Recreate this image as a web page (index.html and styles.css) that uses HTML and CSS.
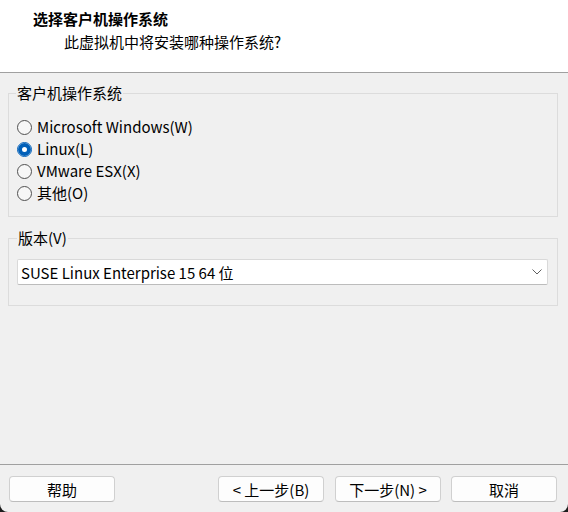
FILE: index.html
```html
<!DOCTYPE html>
<html lang="zh-CN">

<head>
    <meta charset="UTF-8">
    <meta name="viewport" content="width=device-width, initial-scale=1.0">
    <title>新建虚拟机向导</title>
    <link rel="stylesheet" href="styles.css">
</head>

<body>

    <div id="header">
        <p class="title">选择客户机操作系统</p>
        <p class="subtitle">此虚拟机中将安装哪种操作系统?</p>
    </div>

    <div id="main">
        <fieldset class="group group-os">
            <legend>客户机操作系统</legend>
            <label class="option"><input type="radio" name="os">Microsoft Windows(W)</label>
            <label class="option"><input type="radio" name="os" checked>Linux(L)</label>
            <label class="option"><input type="radio" name="os">VMware ESX(X)</label>
            <label class="option"><input type="radio" name="os">其他(O)</label>
        </fieldset>

        <fieldset class="group group-version">
            <legend>版本(V)</legend>
            <div class="select">
                <span>SUSE Linux Enterprise 15 64 位</span>
                <svg width="10" height="6" viewBox="0 0 10 6">
                    <path d="M0.5 0.5 L5 5 L9.5 0.5" fill="none" stroke="#606060" stroke-width="1"/>
                </svg>
            </div>
        </fieldset>
    </div>

    <div id="footer">
        <button class="btn">帮助</button>
        <div class="spacer"></div>
        <button class="btn">&lt; 上一步(B)</button>
        <button class="btn btn-next">下一步(N) &gt;</button>
        <button class="btn btn-cancel">取消</button>
    </div>

</body>

</html>
```

FILE: styles.css
```css
html {
    margin: 0;
    padding: 0;
    background: #1c1c1c;
}

body {
    margin: 0;
    height: 512px;
    display: flex;
    flex-direction: column;
    background: #f0f0f0;
    border-radius: 0 0 8px 8px;
    overflow: hidden;
    font-family: "Noto Sans CJK SC", "Noto Sans", sans-serif;
    font-size: 15px;
    color: #000;
}

#header {
    height: 72px;
    box-sizing: content-box;
    background: #fff;
    border-bottom: 1px solid #a0a0a0;
    padding: 0;
}

#header p {
    margin: 0;
    line-height: 20px;
}

.title {
    padding: 9px 0 0 33px;
    font-weight: bold;
}

.subtitle {
    padding: 3px 0 0 64px;
}

#main {
    flex: 1;
}

.group {
    margin: 10px 10px 0 8px;
    padding: 0 7px;
    border: 1px solid #dcdcdc;
    min-width: 0;
}

.group legend {
    padding: 0 1px;
    line-height: 20px;
}

.group-os {
    padding-top: 13px;
    padding-bottom: 12px;
}

.group-version {
    margin-top: 11px;
    padding: 11px 9px 20px 8px;
}

.option {
    display: flex;
    align-items: center;
    height: 22px;
    line-height: 22px;
    margin-left: 1px;
}

.option input {
    appearance: none;
    -webkit-appearance: none;
    width: 15px;
    height: 15px;
    margin: 0 5px 0 0;
    border: 1px solid #505050;
    border-radius: 50%;
    background: #f7f7f7;
}

.option input:checked {
    border-color: #005fb8;
    background: #fff;
    box-shadow: inset 0 0 0 4px #005fb8;
}

.select {
    height: 26px;
    box-sizing: border-box;
    display: flex;
    align-items: center;
    justify-content: space-between;
    padding: 0 5px 0 3px;
    background: #fff;
    border: 1px solid #d9d9d9;
    border-bottom-color: #bcbcbc;
    border-radius: 2px;
}

#footer {
    display: flex;
    border-top: 1px solid #a0a0a0;
    padding: 11px 11px 10px 9px;
}

.spacer {
    flex: 1;
}

.btn {
    width: 106px;
    height: 26px;
    padding: 0;
    font-family: inherit;
    font-size: 15px;
    color: #000;
    background: #fdfdfd;
    border: 1px solid #d0d0d0;
    border-bottom-color: #bdbdbd;
    border-radius: 4px;
}

.btn-next {
    margin-left: 11px;
}

.btn-cancel {
    margin-left: 10px;
}
```
